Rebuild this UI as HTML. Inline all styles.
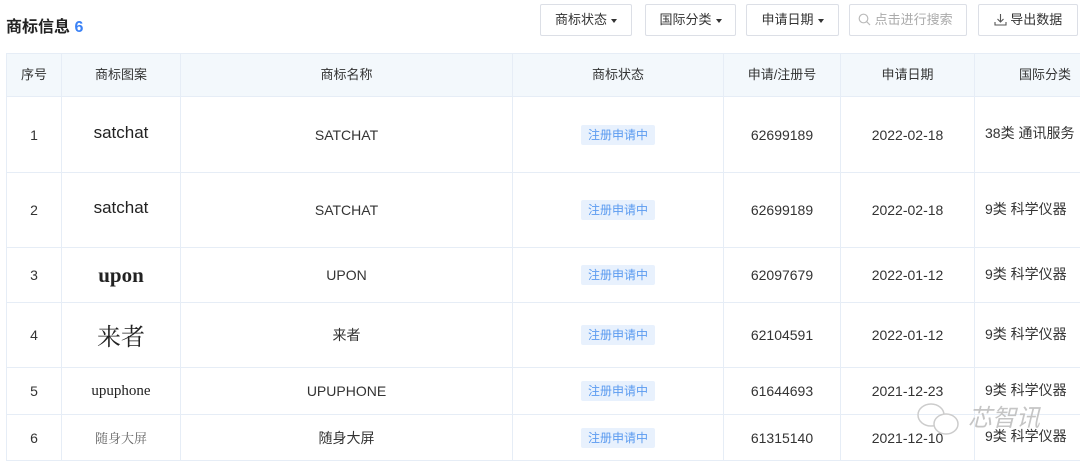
<!DOCTYPE html>
<html><head><meta charset="utf-8"><style>
body{margin:0;width:1080px;height:465px;overflow:hidden;background:#fff;font-family:"Liberation Sans","Noto Sans CJK SC",sans-serif;color:#333;position:relative}
.title{position:absolute;left:6px;top:13px;font-size:16px;font-weight:bold;color:#222}
.title span{color:#3b82f6}
.btn{position:absolute;top:4px;height:32px;border:1px solid #dcdfe6;border-radius:2px;box-sizing:border-box;font-size:13px;color:#333;line-height:30px;text-align:center;background:#fff}
.btn i{display:inline-block;width:0;height:0;border-left:3.5px solid transparent;border-right:3.5px solid transparent;border-top:4px solid #333;vertical-align:middle;margin-left:4px}
table{position:absolute;left:6px;top:53px;border-collapse:collapse;table-layout:fixed;width:1130px}
td,th{border:1px solid #e6edf6;text-align:center;font-size:14px;line-height:18px;font-weight:normal;padding:0;color:#333;white-space:nowrap;overflow:hidden;vertical-align:middle}
th{background:#f3f8fc;height:42px;font-size:13px}
.tag{display:inline-block;background:#e8f1fd;color:#5b9bf0;font-size:12px;padding:0 7px;line-height:20px;border-radius:2px}
td.l{text-align:left;padding-left:10px;padding-bottom:3px}
.wm{position:absolute;color:#bbb;font-size:24px;font-style:italic;opacity:.85}
</style></head><body>
<div class="title">商标信息 <span>6</span></div>
<div class="btn" style="left:540px;width:92px">商标状态<i></i></div>
<div class="btn" style="left:645px;width:91px">国际分类<i></i></div>
<div class="btn" style="left:746px;width:93px">申请日期<i></i></div>
<div class="btn" style="left:849px;width:118px;color:#aaa;text-align:left;padding-left:8px"><svg width="13" height="13" viewBox="0 0 13 13" style="vertical-align:-2px"><circle cx="5.5" cy="5.5" r="4.3" fill="none" stroke="#bbb" stroke-width="1.2"/><path d="M8.6 8.6L12 12" stroke="#bbb" stroke-width="1.2"/></svg> 点击进行搜索</div>
<div class="btn" style="left:978px;width:100px"><svg width="13" height="13" viewBox="0 0 13 13" style="vertical-align:-2px"><path d="M6.5 1v8M3.5 6l3 3 3-3M1 9v3h11V9" fill="none" stroke="#555" stroke-width="1.1"/></svg> 导出数据</div>
<table>
<colgroup><col style="width:55px"><col style="width:119px"><col style="width:332px"><col style="width:211px"><col style="width:117px"><col style="width:134px"><col style="width:162px"></colgroup>
<tr><th>序号</th><th>商标图案</th><th>商标名称</th><th>商标状态</th><th>申请/注册号</th><th>申请日期</th><th style="text-align:left;padding-left:44px">国际分类</th></tr>
<tr style="height:76px"><td>1</td><td style="font-size:17px;color:#222;padding-bottom:4px">satchat</td><td>SATCHAT</td><td><span class="tag">注册申请中</span></td><td>62699189</td><td>2022-02-18</td><td class="l">38类 通讯服务</td></tr>
<tr style="height:75px"><td>2</td><td style="font-size:17px;color:#222;padding-bottom:4px">satchat</td><td>SATCHAT</td><td><span class="tag">注册申请中</span></td><td>62699189</td><td>2022-02-18</td><td class="l">9类 科学仪器</td></tr>
<tr style="height:55px"><td>3</td><td style="font-family:'Liberation Serif',serif;font-size:21px;font-weight:bold;color:#222">upon</td><td>UPON</td><td><span class="tag">注册申请中</span></td><td>62097679</td><td>2022-01-12</td><td class="l">9类 科学仪器</td></tr>
<tr style="height:65px"><td>4</td><td style="font-family:'Noto Serif CJK SC',serif;font-size:24px;line-height:28px;color:#222">来者</td><td>来者</td><td><span class="tag">注册申请中</span></td><td>62104591</td><td>2022-01-12</td><td class="l">9类 科学仪器</td></tr>
<tr style="height:47px"><td>5</td><td style="font-family:'Liberation Serif',serif;font-size:15px;color:#222">upuphone</td><td>UPUPHONE</td><td><span class="tag">注册申请中</span></td><td>61644693</td><td>2021-12-23</td><td class="l">9类 科学仪器</td></tr>
<tr style="height:46px"><td>6</td><td style="font-family:'Noto Serif CJK SC',serif;font-size:13px;color:#666">随身大屏</td><td>随身大屏</td><td><span class="tag">注册申请中</span></td><td>61315140</td><td>2021-12-10</td><td class="l">9类 科学仪器</td></tr>
</table>
<svg style="position:absolute;left:916px;top:402px" width="46" height="36" viewBox="0 0 46 36"><ellipse cx="15" cy="13" rx="13" ry="11" fill="none" stroke="#ccc" stroke-width="1.5"/><ellipse cx="30" cy="22" rx="12" ry="10" fill="#fff" stroke="#ccc" stroke-width="1.5"/></svg>
<div class="wm" style="left:968px;top:398px">芯智讯</div>
</body></html>
